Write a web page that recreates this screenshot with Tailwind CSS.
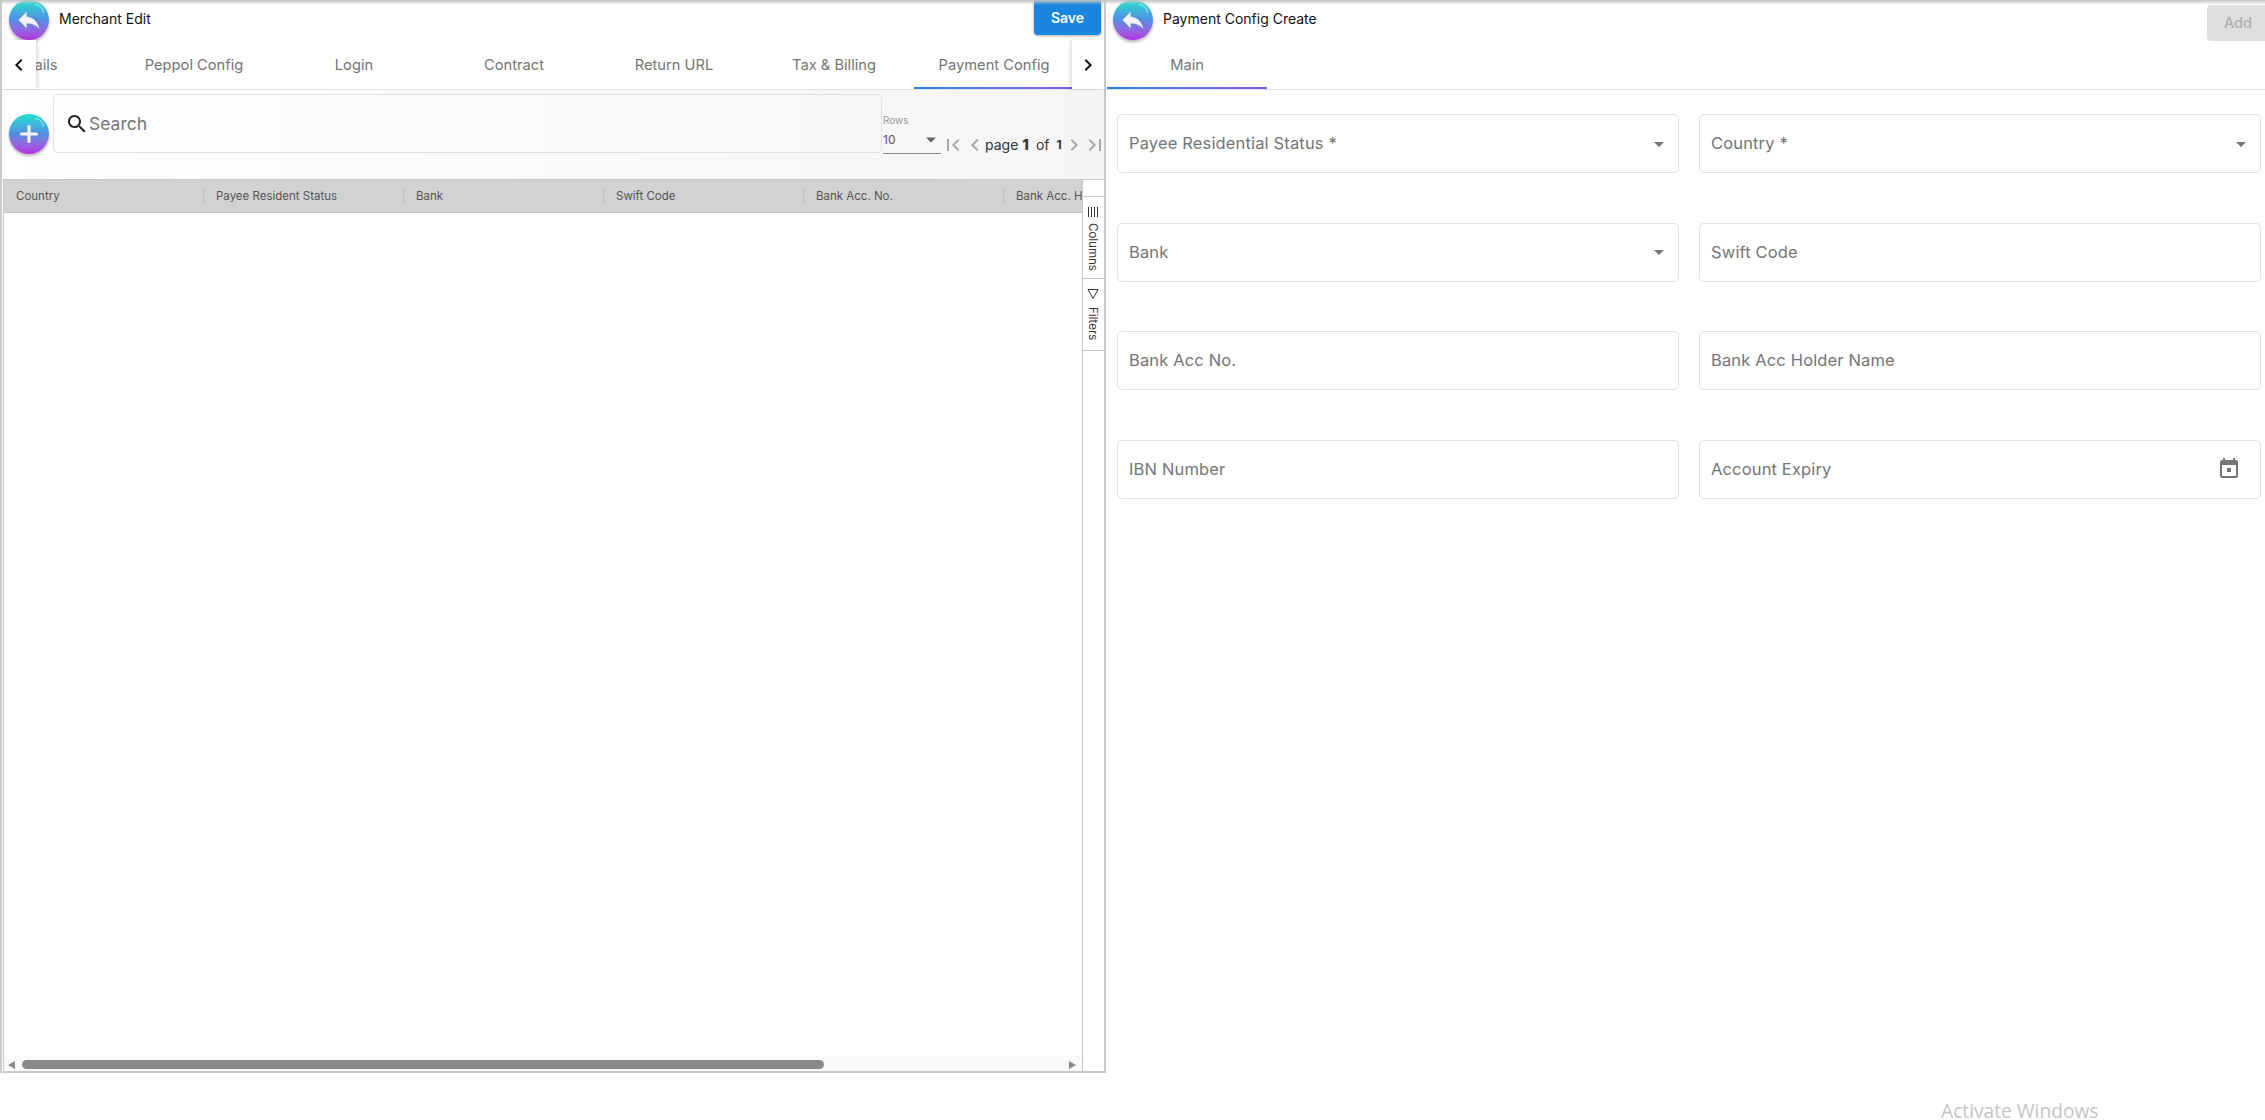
<!DOCTYPE html>
<html lang="en">

<head>
    <meta charset="UTF-8">
    <meta name="viewport" content="width=device-width, initial-scale=1.0">
    <script src="https://cdn.jsdelivr.net/npm/@tailwindcss/browser@4"></script>
    <title>Payment Config Create</title>
</head>

<body class="relative h-[1120px] w-[2265px] overflow-hidden bg-white font-['Inter',sans-serif] text-[#757575]">

    <!--top edge shadow-->
    <div class="pointer-events-none absolute inset-x-0 top-0 z-20 h-[5px] bg-linear-to-b from-[#c4c4c4] to-transparent"></div>

    <div class="flex items-start">

        <!--------------------LEFT PANEL: merchant edit-------------------->
        <section class="flex h-[1073px] w-[1106px] flex-col border-x-2 border-b-0 border-[#c9c9c9]">

            <!--title bar-->
            <div class="flex h-[40px] items-start">
                <button class="relative ml-[7px] flex h-[40px] w-[40px] shrink-0 items-center justify-center rounded-full bg-linear-to-b from-[#12e2cc] via-[#4f8ce2] to-[#b52ae0] shadow-[0_2px_3px_rgba(0,0,0,0.3)]">
                    <svg class="h-[28px] w-[28px]" viewBox="0 0 24 24" fill="#f2f2f2"><path d="M10 9V5l-7 7 7 7v-4.1c5 0 8.5 1.6 11 5.1-1-5-4-10-11-11z" /></svg>
                    <span class="absolute right-[5px] top-[4px] h-[9px] w-[9px] rounded-tr-full border-r border-t border-white/60"></span>
                </button>
                <h1 class="ml-[10px] mt-[10px] text-[14px] font-normal leading-[18px] text-[#111]">Merchant Edit</h1>
                <button class="ml-auto mr-[3px] h-[35px] w-[67px] rounded-b-[4px] bg-[#1a86e0] text-[14px] font-semibold text-white shadow-[0_1px_3px_rgba(0,0,0,0.35)]">Save</button>
            </div>

            <!--tabs-->
            <div class="relative flex h-[50px] border-b border-[#e2e2e2] text-[14.7px]">
                <button class="z-10 flex h-[49px] w-[34px] shrink-0 items-center justify-center bg-white shadow-[2px_0_3px_rgba(0,0,0,0.12)]">
                    <svg class="h-[24px] w-[24px]" viewBox="0 0 24 24" fill="#111"><path d="M15.41 7.41 14 6l-6 6 6 6 1.41-1.41L10.83 12z" /></svg>
                </button>
                <div class="flex h-[49px] w-[1036px] overflow-hidden">
                    <div class="ml-[-82px] flex">
                        <div class="flex w-[160px] shrink-0 items-center justify-center pt-[2px]">Details</div>
                        <div class="flex w-[160px] shrink-0 items-center justify-center pt-[2px]">Peppol Config</div>
                        <div class="flex w-[160px] shrink-0 items-center justify-center pt-[2px]">Login</div>
                        <div class="flex w-[160px] shrink-0 items-center justify-center pt-[2px]">Contract</div>
                        <div class="flex w-[160px] shrink-0 items-center justify-center pt-[2px]">Return URL</div>
                        <div class="flex w-[160px] shrink-0 items-center justify-center pt-[2px]">Tax &amp; Billing</div>
                        <div class="relative flex w-[160px] shrink-0 items-center justify-center pt-[2px]">Payment Config
                            <span class="absolute inset-x-0 bottom-0 h-[2px] bg-linear-to-r from-[#1a86e0] to-[#7c5ce0]"></span>
                        </div>
                    </div>
                </div>
                <button class="z-10 flex h-[49px] flex-1 items-center justify-center bg-white shadow-[-2px_0_3px_rgba(0,0,0,0.12)]">
                    <svg class="h-[24px] w-[24px]" viewBox="0 0 24 24" fill="#111"><path d="M8.59 16.59 10 18l6-6-6-6-1.41 1.41L13.17 12z" /></svg>
                </button>
            </div>

            <!--toolbar-->
            <div class="flex h-[89px] shrink-0 items-start bg-linear-to-r from-white to-[#f5f5f5]">
                <button class="relative ml-[7px] mt-[24px] flex h-[40px] w-[40px] shrink-0 items-center justify-center rounded-full bg-linear-to-b from-[#12e2cc] via-[#4f8ce2] to-[#b52ae0] shadow-[0_2px_3px_rgba(0,0,0,0.3)]">
                    <svg class="h-[24px] w-[24px]" viewBox="0 0 24 24" fill="none" stroke="#f2f2f2" stroke-width="3.2" stroke-linecap="round"><path d="M12 4.5v15M4.5 12h15" /></svg>
                    <span class="absolute right-[5px] top-[4px] h-[9px] w-[9px] rounded-tr-full border-r border-t border-white/60"></span>
                </button>
                <div class="ml-[4px] mt-[4px] flex h-[59px] w-[829px] shrink-0 items-center rounded-[5px] border border-[#e0e0e0] pl-[11px] text-[17.5px]">
                    <svg class="h-[24px] w-[24px] shrink-0" viewBox="0 0 24 24" fill="#222"><path d="M15.5 14h-.79l-.28-.27C15.41 12.59 16 11.11 16 9.5 16 5.91 13.09 3 9.5 3S3 5.91 3 9.5 5.91 16 9.5 16c1.61 0 3.09-.59 4.23-1.57l.27.28v.79l5 4.99L20.49 19l-4.99-5zm-6 0C7.01 14 5 11.99 5 9.5S7.01 5 9.5 5 14 7.01 14 9.5 11.99 14 9.5 14z" /></svg>
                    <span class="pt-px">Search</span>
                </div>
                <div class="ml-px mt-[24px] w-[58px] shrink-0">
                    <div class="text-[10px] leading-[12px] text-[#999]">Rows</div>
                    <div class="mt-[2px] flex h-[26px] items-start justify-between border-b border-[#8a8a8a] text-[12px] leading-[24px] text-[#555]">
                        <span>10</span>
                        <svg class="mt-[2px] h-[20px] w-[20px]" viewBox="0 0 24 24" fill="#666"><path d="M6 9h12l-6 6z" /></svg>
                    </div>
                </div>
                <div class="mt-[43px] flex items-center text-[14px] leading-[24px] text-[#333]">
                    <svg class="h-[24px] w-[24px]" viewBox="0 0 24 24" fill="#a8a8a8"><path d="M18.41 16.59 13.82 12l4.59-4.59L17 6l-6 6 6 6zM6 6h2v12H6z" /></svg>
                    <svg class="ml-[-2px] h-[24px] w-[24px]" viewBox="0 0 24 24" fill="#a8a8a8"><path d="M15.41 7.41 14 6l-6 6 6 6 1.41-1.41L10.83 12z" /></svg>
                    <span class="ml-[-2px]">page</span><b class="ml-[4px] text-[15px] font-extrabold">1</b><span class="ml-[7px]">of</span><b class="ml-[7px] text-[12px] font-bold">1</b>
                    <svg class="h-[24px] w-[24px]" viewBox="0 0 24 24" fill="#a8a8a8"><path d="M8.59 16.59 10 18l6-6-6-6-1.41 1.41L13.17 12z" /></svg>
                    <svg class="ml-[-3px] h-[24px] w-[24px]" viewBox="0 0 24 24" fill="#a8a8a8"><path d="M5.59 7.41 10.18 12l-4.59 4.59L7 18l6-6-6-6zM16 6h2v12h-2z" /></svg>
                </div>
            </div>

            <!--grid-->
            <div class="ml-px flex min-h-0 flex-1 overflow-hidden border-t border-b-2 border-l border-[#c9c9c9]">
                <div class="flex w-[1078px] flex-col">
                    <div class="flex h-[33px] shrink-0 overflow-hidden border-b border-[#bfc4c8] bg-[#d2d2d2] text-[11.5px] text-[#555]">
                        <div class="flex w-[200px] shrink-0 items-center px-[12px]"><span class="flex-1 pt-[2px]">Country</span><i class="mr-[-12px] h-[16px] w-px bg-[#c2c2c2]"></i></div>
                        <div class="flex w-[200px] shrink-0 items-center px-[12px]"><span class="flex-1 pt-[2px]">Payee Resident Status</span><i class="mr-[-12px] h-[16px] w-px bg-[#c2c2c2]"></i></div>
                        <div class="flex w-[200px] shrink-0 items-center px-[12px]"><span class="flex-1 pt-[2px]">Bank</span><i class="mr-[-12px] h-[16px] w-px bg-[#c2c2c2]"></i></div>
                        <div class="flex w-[200px] shrink-0 items-center px-[12px]"><span class="flex-1 pt-[2px]">Swift Code</span><i class="mr-[-12px] h-[16px] w-px bg-[#c2c2c2]"></i></div>
                        <div class="flex w-[200px] shrink-0 items-center px-[12px]"><span class="flex-1 pt-[2px]">Bank Acc. No.</span><i class="mr-[-12px] h-[16px] w-px bg-[#c2c2c2]"></i></div>
                        <div class="flex w-[200px] shrink-0 items-center whitespace-nowrap px-[12px] pt-[2px]">Bank Acc. Holder Name</div>
                    </div>
                    <div class="flex-1 bg-white"></div>
                    <!--horizontal scrollbar-->
                    <div class="flex h-[15px] shrink-0 items-start bg-[#fafafa] pl-[4px] pt-[4px]">
                        <span class="mt-[1px] h-0 w-0 border-y-[4px] border-r-[7px] border-y-transparent border-r-[#8a8a8a]"></span>
                        <span class="ml-[7px] h-[9px] w-[802px] rounded-full bg-[#8a8a8a]"></span>
                        <span class="ml-[245px] mt-[1px] h-0 w-0 border-y-[4px] border-l-[7px] border-y-transparent border-l-[#8a8a8a]"></span>
                    </div>
                </div>

                <!--side buttons-->
                <div class="flex-1 border-l border-[#c9c9c9] text-[11.5px] text-[#333]">
                    <div class="mt-[16px] flex h-[83px] flex-col items-center border-y border-[#c9c9c9] pr-[2px] pt-[9px]">
                        <svg class="h-[12px] w-[12px]" viewBox="0 0 12 12" stroke="#333" stroke-width="1"><path d="M1.5 1v10M4.5 1v10M7.5 1v10M10.5 1v10" /></svg>
                        <span class="mt-[5px] [writing-mode:vertical-rl]">Columns</span>
                    </div>
                    <div class="flex h-[72px] flex-col items-center border-b border-[#c9c9c9] pr-[2px] pt-[9px]">
                        <svg class="h-[12px] w-[12px]" viewBox="0 0 12 12" fill="none" stroke="#333" stroke-width="1"><path d="M1 1.5h10L6 10.5z" /></svg>
                        <span class="mt-[7px] [writing-mode:vertical-rl]">Filters</span>
                    </div>
                </div>
            </div>
        </section>

        <!--------------------RIGHT PANEL: payment config create-------------------->
        <section class="flex-1">
            <div class="flex h-[40px] items-start">
                <button class="relative ml-[7px] flex h-[40px] w-[40px] shrink-0 items-center justify-center rounded-full bg-linear-to-b from-[#12e2cc] via-[#4f8ce2] to-[#b52ae0] shadow-[0_2px_3px_rgba(0,0,0,0.3)]">
                    <svg class="h-[28px] w-[28px]" viewBox="0 0 24 24" fill="#f2f2f2"><path d="M10 9V5l-7 7 7 7v-4.1c5 0 8.5 1.6 11 5.1-1-5-4-10-11-11z" /></svg>
                    <span class="absolute right-[5px] top-[4px] h-[9px] w-[9px] rounded-tr-full border-r border-t border-white/60"></span>
                </button>
                <h2 class="ml-[10px] mt-[10px] text-[14px] font-normal leading-[18px] text-[#111]">Payment Config Create</h2>
                <button class="ml-auto mt-[5px] h-[36px] w-[58px] rounded-l-[4px] bg-[#dedede] pl-[4px] text-[14.5px] font-medium text-[#adadad]">Add</button>
            </div>
            <div class="flex h-[50px] border-b border-[#e2e2e2] pl-px text-[14.7px]">
                <div class="relative flex h-[49px] w-[160px] items-center justify-center pt-[2px]">Main
                    <span class="absolute inset-x-0 bottom-0 h-[2px] bg-linear-to-r from-[#1a86e0] to-[#7c5ce0]"></span>
                </div>
            </div>
            <div class="grid grid-cols-[562px_562px] gap-x-[20px] gap-y-[49.67px] pl-[11px] pt-[24px] text-[16.5px] tracking-[0.15px]">
                <div class="flex h-[59px] items-center justify-between rounded-[5px] border border-[#e0e0e0] pl-[11px] pr-[7px]"><span>Payee Residential Status *</span>
                    <svg class="h-[24px] w-[24px]" viewBox="0 0 24 24" fill="#757575"><path d="M7 10l5 5 5-5z" /></svg></div>
                <div class="flex h-[59px] items-center justify-between rounded-[5px] border border-[#e0e0e0] pl-[11px] pr-[7px]"><span>Country *</span>
                    <svg class="h-[24px] w-[24px]" viewBox="0 0 24 24" fill="#757575"><path d="M7 10l5 5 5-5z" /></svg></div>
                <div class="flex h-[59px] items-center justify-between rounded-[5px] border border-[#e0e0e0] pl-[11px] pr-[7px]"><span>Bank</span>
                    <svg class="h-[24px] w-[24px]" viewBox="0 0 24 24" fill="#757575"><path d="M7 10l5 5 5-5z" /></svg></div>
                <div class="flex h-[59px] items-center rounded-[5px] border border-[#e0e0e0] pl-[11px]">Swift Code</div>
                <div class="flex h-[59px] items-center rounded-[5px] border border-[#e0e0e0] pl-[11px]">Bank Acc No.</div>
                <div class="flex h-[59px] items-center rounded-[5px] border border-[#e0e0e0] pl-[11px]">Bank Acc Holder Name</div>
                <div class="flex h-[59px] items-center rounded-[5px] border border-[#e0e0e0] pl-[11px]">IBN Number</div>
                <div class="flex h-[59px] items-center justify-between rounded-[5px] border border-[#e0e0e0] pl-[11px] pr-[19px]"><span>Account Expiry</span>
                    <svg class="h-[24px] w-[24px]" viewBox="0 0 24 24" fill="#757575"><path d="M16 1v2H8V1H6v2H5c-1.11 0-2 .9-2 2v14c0 1.1.89 2 2 2h14c1.1 0 2-.9 2-2V5c0-1.1-.9-2-2-2h-1V1h-2zm3 18H5V8h14v11zM10 11h4v4h-4z" /></svg></div>
            </div>
        </section>
    </div>

    <!--windows watermark-->
    <div class="absolute left-[1941px] top-[1098px] font-['Open_Sans',sans-serif] text-[19.2px] leading-[26px] text-[#c4c4c4]">Activate Windows</div>

</body>

</html>
